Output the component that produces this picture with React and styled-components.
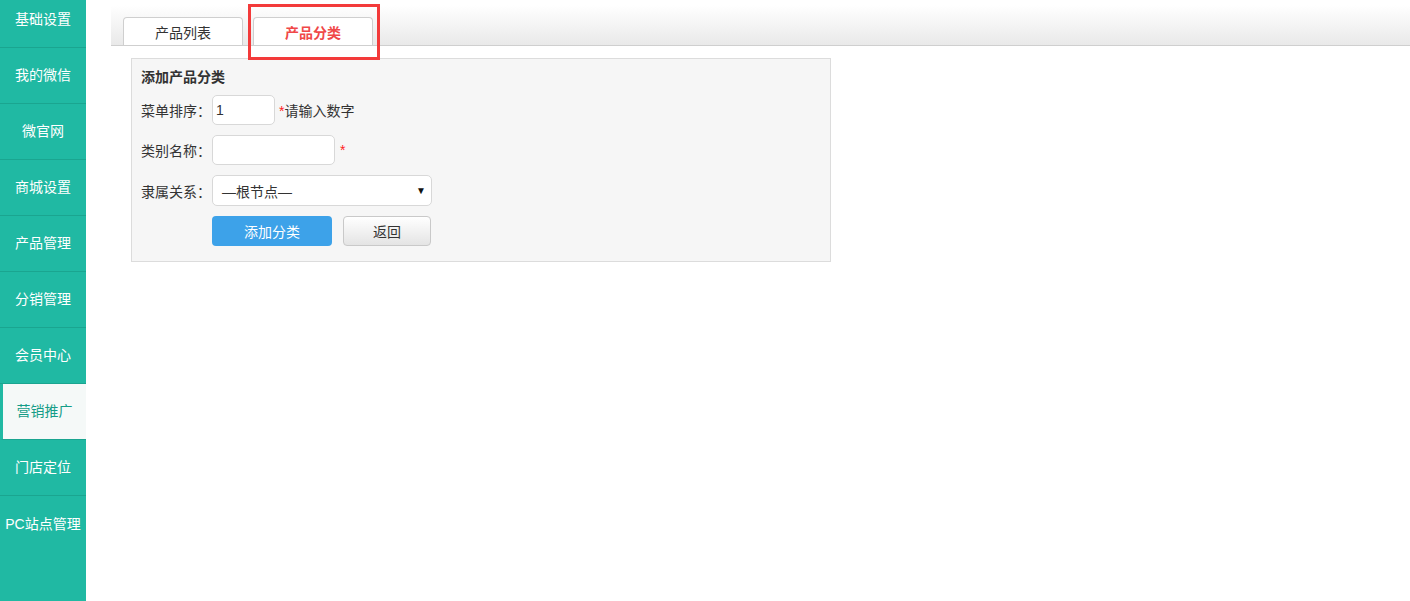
import React from 'react';
import styled, { createGlobalStyle } from 'styled-components';

const GlobalStyle = createGlobalStyle`
    html, body {
        margin: 0;
        padding: 0;
        background: #fff;
        font-family: "Liberation Sans", "Noto Sans CJK SC", sans-serif;
        font-size: 14px;
        color: #333;
    }
`;

const Page = styled.div`
    display: flex;
    width: 1410px;
    height: 601px;
    overflow: hidden;
`;

const Sidebar = styled.nav`
    width: 86px;
    flex-shrink: 0;
    background: #20b9a3;
    overflow: hidden;
`;

const MenuList = styled.div`
    margin-top: -8px;
    display: flex;
    flex-direction: column;
`;

const MenuItem = styled.div`
    box-sizing: border-box;
    height: 56px;
    padding-bottom: 3px;
    border-bottom: 1px solid #1aa590;
    display: flex;
    align-items: center;
    justify-content: center;
    font-size: 14px;
    white-space: nowrap;
    color: ${p => (p.$active ? '#159d88' : '#fff')};
    background: ${p => (p.$active ? '#f5f9f8' : 'transparent')};
    border-left: ${p => (p.$active ? '3px solid #20b9a3' : '0')};

    &:last-child {
        border-bottom: 0;
    }
`;

const Main = styled.div`
    flex: 1;
    padding: 5px 0 0 25px;
`;

const TabBar = styled.div`
    position: relative;
    height: 40px;
    background: linear-gradient(#ffffff, #e9e9e9);
    border-bottom: 1px solid #cfcfcf;
    display: flex;
    align-items: flex-end;
    gap: 10px;
    padding-left: 12px;
`;

const Tab = styled.div`
    width: 118px;
    height: 27px;
    background: #fff;
    border: 1px solid #cfcfcf;
    border-bottom: 0;
    border-radius: 4px 4px 0 0;
    display: flex;
    align-items: center;
    justify-content: center;
    font-size: 14px;
    color: ${p => (p.$active ? '#f04848' : '#333')};
    font-weight: ${p => (p.$active ? 'bold' : 'normal')};
`;

const Highlight = styled.div`
    position: absolute;
    left: 137px;
    top: -1px;
    width: 126px;
    height: 50px;
    border: 3px solid #f33a3a;
    pointer-events: none;
`;

const Panel = styled.div`
    margin: 12px 0 0 20px;
    width: 679px;
    padding: 7px 10px 15px 9px;
    background: #f6f6f6;
    border: 1px solid #dcdcdc;
`;

const Title = styled.div`
    font-weight: bold;
    font-size: 14px;
    color: #333;
    margin-bottom: 9px;
`;

const Row = styled.div`
    display: flex;
    align-items: center;
    margin-bottom: 10px;
`;

const Label = styled.span`
    width: 71px;
    font-size: 14px;
    color: #333;
`;

const Input = styled.input`
    box-sizing: border-box;
    width: ${p => p.$w}px;
    height: 30px;
    border: 1px solid #d8d8d8;
    border-radius: 5px;
    background: #fff;
    padding: 0 3px;
    font-family: inherit;
    font-size: 14px;
    color: #333;
    outline: none;
`;

const Hint = styled.span`
    margin-left: 4px;
    font-size: 14px;
    color: #333;
`;

const Star = styled.span`
    color: #f22;
    margin-left: ${p => p.$gap || 0}px;
`;

const Select = styled.div`
    box-sizing: border-box;
    width: 220px;
    height: 31px;
    border: 1px solid #d8d8d8;
    border-radius: 5px;
    background: #fff;
    display: flex;
    align-items: center;
    justify-content: space-between;
    padding: 0 5px 0 9px;
    font-size: 14px;
    color: #333;
`;

const Caret = styled.span`
    font-size: 10px;
    color: #111;
`;

const Buttons = styled.div`
    display: flex;
    gap: 11px;
    margin-top: 1px;
    padding-left: 71px;
`;

const PrimaryButton = styled.button`
    width: 120px;
    height: 30px;
    border: 0;
    border-radius: 4px;
    background: #3da2e9;
    color: #fff;
    font-family: inherit;
    font-size: 14px;
`;

const BackButton = styled.button`
    width: 88px;
    height: 30px;
    border: 1px solid #c9c9c9;
    border-radius: 4px;
    background: linear-gradient(#ffffff, #e4e4e4);
    color: #333;
    font-family: inherit;
    font-size: 14px;
`;

const menu = ['基础设置', '我的微信', '微官网', '商城设置', '产品管理', '分销管理', '会员中心', '营销推广', '门店定位', 'PC站点管理'];

export default function App() {
    return (
        <Page>
            <GlobalStyle />
            <Sidebar>
                <MenuList>
                    {menu.map((m, i) => (
                        <MenuItem key={i} $active={m === '营销推广'}>{m}</MenuItem>
                    ))}
                </MenuList>
            </Sidebar>
            <Main>
                <TabBar>
                    <Tab>产品列表</Tab>
                    <Tab $active>产品分类</Tab>
                    <Highlight />
                </TabBar>
                <Panel>
                    <Title>添加产品分类</Title>
                    <Row>
                        <Label>菜单排序：</Label>
                        <Input $w={63} defaultValue="1" />
                        <Hint><Star>*</Star>请输入数字</Hint>
                    </Row>
                    <Row>
                        <Label>类别名称：</Label>
                        <Input $w={123} />
                        <Star $gap={5}>*</Star>
                    </Row>
                    <Row>
                        <Label>隶属关系：</Label>
                        <Select>
                            <span>—根节点—</span>
                            <Caret>▼</Caret>
                        </Select>
                    </Row>
                    <Buttons>
                        <PrimaryButton>添加分类</PrimaryButton>
                        <BackButton>返回</BackButton>
                    </Buttons>
                </Panel>
            </Main>
        </Page>
    );
}
